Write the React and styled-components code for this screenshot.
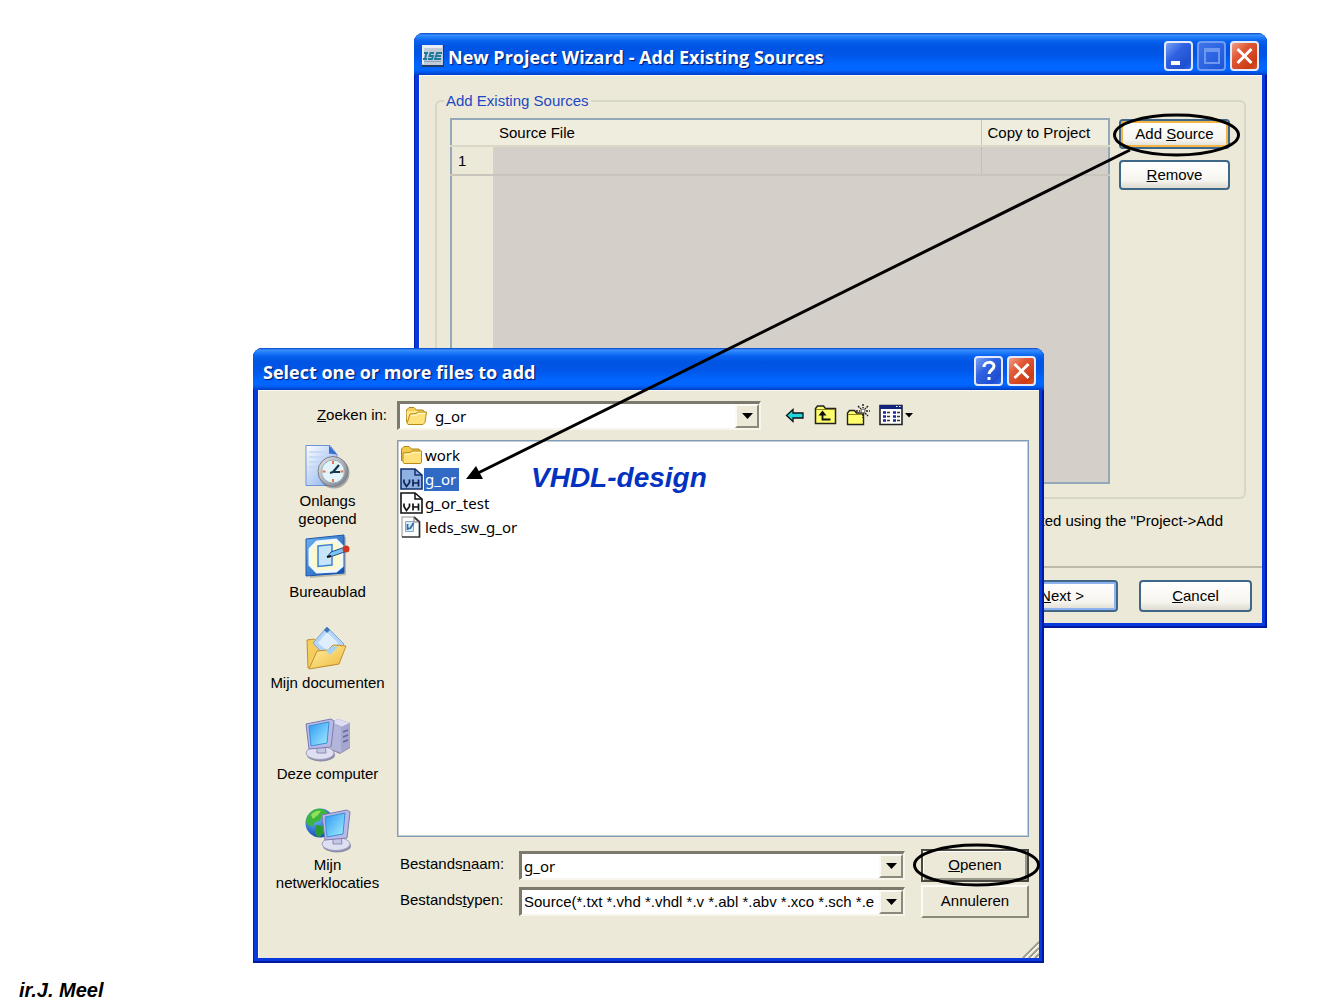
import React from "react";
import styled, { createGlobalStyle, css } from "styled-components";

const face = "#ece9d8";
const ui = '"Liberation Sans", Arial, sans-serif';
const tahoma = '"Noto Sans", Tahoma, sans-serif';

const GlobalStyle = createGlobalStyle`
  *, *::before, *::after { box-sizing: border-box; }
  body { margin: 0; background: #fff; color: #000; font: 15px/18px ${ui}; }
  button, input, select { font: inherit; color: inherit; margin: 0; }
`;

const Slide = styled.main`
  position: relative;
  min-height: 100vh;
  overflow: hidden;
`;

/* ---------- windows ---------- */

const Window = styled.section`
  position: absolute;
  left: ${(p) => p.$x}px;
  top: ${(p) => p.$y}px;
  width: ${(p) => p.$w}px;
  display: flex;
  flex-direction: column;
  padding: 0 5px 5px;
  border-radius: 9px 9px 0 0;
  background: #0839dc;
  box-shadow: inset -2px -2px 0 #00189c, inset 1px 0 0 #0020b0;
  overflow: hidden;
`;

const TitleBar = styled.header`
  display: flex;
  align-items: center;
  gap: 4px;
  height: 42px;
  margin: 0 -5px;
  padding: 4px 8px 0 ${(p) => p.$indent}px;
  background: linear-gradient(
    #0a46c8 0, #3a90ff 2px, #2480fa 4px, #0862ee 8px, #0054e3 14px,
    #0056e8 22px, #0066ff 32px, #0066ff 37px, #0050e0 40px, #003cc0 42px
  );
`;

const Title = styled.h1`
  flex: 1;
  margin: 0;
  padding-top: 2px;
  color: #fff;
  font: 700 18px/24px "Open Sans", "Trebuchet MS", sans-serif;
  white-space: nowrap;
  text-shadow: 1px 1px 1px #00136b;
`;

const captionTone = {
  blue: "linear-gradient(135deg, #7ba2f5, #2f62e0 40%, #1f4fd0 80%, #2a6cf0)",
  dim: "linear-gradient(135deg, #3f74e8, #1c55dc)",
  red: "linear-gradient(135deg, #f0a088, #e05a38 35%, #cc3c14 80%, #d8552c)",
};

const CaptionButton = styled.button`
  width: 29px;
  height: 30px;
  padding: 0;
  border: 2px solid ${(p) => (p.$tone === "dim" ? "#6f9bf2" : "#e4eafa")};
  border-radius: 4px;
  background: ${(p) => captionTone[p.$tone]};
  svg { display: block; width: 100%; height: 100%; }
`;

const Body = styled.div`
  background: ${face};
  box-shadow: inset 1px 1px 0 #fbf9f0;
`;

/* ---------- wizard ---------- */

const WizardBody = styled(Body)`
  padding-top: 17px;
`;

const Group = styled.fieldset`
  display: flex;
  align-items: flex-start;
  gap: 9px;
  height: 407px;
  margin: 0 16px;
  padding: 8px 14px 12px 13px;
  border: 2px solid #d8d6c6;
  border-radius: 6px;
`;

const Legend = styled.legend`
  margin-left: -6px;
  padding: 0 2px;
  color: #1c48c4;
`;

const SourceTable = styled.table`
  flex: 1;
  height: 366px;
  table-layout: fixed;
  border-collapse: collapse;
  border: 2px solid #93a9b8;
  background: #d4cfc8;
  text-align: left;
  th, td { padding: 0 6px; font-weight: 400; }
  thead th { height: 27px; background: #efedde; border-bottom: 2px solid #dcd8c8; }
  tbody th { background: ${face}; }
`;

const SourceRow = styled.tr`
  height: 29px;
  th, td { border-bottom: 2px solid #c9c5bc; }
  td + td { border-left: 1px solid #c4c0b8; }
`;

const RowHead = styled.col`
  width: 42px;
`;
const CopyCol = styled.col`
  width: 128px;
`;

const CopyHead = styled.th`
  border-left: 1px solid #c8c5b4;
`;

const ButtonColumn = styled.div`
  display: flex;
  flex-direction: column;
  gap: 11px;
  width: 111px;
  padding-top: 1px;
`;

const XpButton = styled.button`
  height: ${(p) => p.$h || 30}px;
  width: ${(p) => (p.$w ? `${p.$w}px` : "auto")};
  padding: 0;
  border: 2px solid #3f6788;
  border-radius: 4px;
  background: linear-gradient(#fff, #f6f5ef 70%, #dedbd0);
  ${(p) => p.$glow && css`box-shadow: inset 0 0 0 2px ${p.$glow};`}
`;

const Hint = styled.p`
  margin: 0;
  padding: 13px 39px 36px;
  text-align: right;
  white-space: nowrap;
`;

const WizardFooter = styled.footer`
  display: flex;
  justify-content: flex-end;
  gap: 21px;
  padding: 12px 10px 11px;
  border-top: 2px solid #bdbaac;
`;

/* ---------- file dialog ---------- */

const DialogBody = styled(Body)`
  padding: 11px 10px 0 0;
  position: relative;
`;

const LookIn = styled.div`
  display: flex;
  align-items: center;
  height: 28px;
`;

const LookLabel = styled.label`
  width: 139px;
  padding-right: 10px;
  text-align: right;
`;

const Combo = styled.div`
  display: flex;
  align-items: center;
  width: ${(p) => (p.$w ? `${p.$w}px` : "auto")};
  height: 29px;
  border: 2px solid;
  border-width: 3px 2px 2px 3px;
  border-color: #7c7a6c #f8f6ec #f8f6ec #7c7a6c;
  background: #fff;
  > svg { margin: 0 5px; flex: none; }
`;

const field = css`
  flex: 1;
  min-width: 0;
  height: 100%;
  padding: 0 2px;
  border: 0;
  outline: 0;
  background: transparent;
  line-height: 24px;
  appearance: none;
`;

const Select = styled.select`
  ${field}
  font-family: ${(p) => (p.$tahoma ? tahoma : ui)};
`;

const Input = styled.input`
  ${field}
  font-family: ${tahoma};
`;

const arrowBox = css`
  display: grid;
  place-items: center;
  width: 24px;
  height: 100%;
  padding: 0;
  border: 2px solid;
  border-color: #fbfaf4 #8b897a #8b897a #fbfaf4;
  background: ${face};
`;
const ArrowBox = styled.span`
  ${arrowBox}
  pointer-events: none;
`;
const ArrowButton = styled.button`
  ${arrowBox}
`;

const Tools = styled.div`
  display: flex;
  align-items: center;
  gap: 9px;
  margin-left: 24px;
`;

const ToolButton = styled.button`
  display: flex;
  padding: 0;
  border: 0;
  background: none;
`;

const Columns = styled.div`
  display: flex;
  margin-top: 11px;
`;

const Places = styled.nav`
  width: 139px;
  padding-top: 3px;
`;

const Place = styled.a`
  display: flex;
  flex-direction: column;
  align-items: center;
  gap: 3px;
  height: 91px;
  color: inherit;
  text-align: center;
  text-decoration: none;
  svg { flex: none; }
`;

const PlaceName = styled.span`
  width: 116px;
`;

const Main = styled.div`
  flex: 1;
  min-width: 0;
  padding-bottom: 40px;
`;

const FileList = styled.ul`
  height: 397px;
  margin: 0 0 12px;
  padding: 2px;
  list-style: none;
  border: 1px solid #7f9db9;
  outline: 1px solid #c3ccd0;
  outline-offset: -2px;
  background: #fff;
  font-family: ${tahoma};
`;

const FileItem = styled.li`
  display: flex;
  align-items: center;
  height: 24px;
`;

const FileName = styled.span`
  margin-left: 1px;
  padding: 2px 3px 2px 1px;
  line-height: 19px;
  ${(p) => p.$selected && css`background: #316ac5; color: #fff;`}
`;

const Form = styled.div`
  display: grid;
  grid-template-columns: 119px 1fr 107px;
  grid-auto-rows: 33px;
  row-gap: 3px;
  align-items: center;
  label { padding-left: 3px; padding-bottom: 4px; }
`;

const ClassicButton = styled.button`
  height: 33px;
  margin-left: -1px;
  padding: 0 0 2px;
  border: 2px solid;
  border-color: #fbfaf4 #8b897a #8b897a #fbfaf4;
  background: ${face};
  ${(p) => p.$default && css`
    border-color: #4a4840;
    box-shadow: inset 1px 1px 0 #fff, inset -2px -2px 0 #9a988a;
  `}
`;

const FormField = styled(Combo)`
  margin-left: 3px;
  margin-right: 17px;
`;

const Grip = styled.svg`
  position: absolute;
  right: 0;
  bottom: 0;
`;

/* ---------- slide annotations ---------- */

const Marks = styled.svg`
  position: absolute;
  left: 0;
  top: 0;
  pointer-events: none;
`;

const Note = styled.p`
  position: absolute;
  left: 531px;
  top: 458px;
  margin: 0;
  color: #0432c0;
  font: italic 700 28px/40px "Arial Narrow", ${ui};
`;

const Author = styled.p`
  position: absolute;
  left: 19px;
  top: 978px;
  margin: 0;
  font: italic 700 20px/24px "Arial Narrow", ${ui};
`;

/* ---------- icons ---------- */

const Cross = () => (
  <svg viewBox="0 0 25 26"><path d="M5.500 6l14 14M19.500 6l-14 14" stroke="#fff" strokeWidth="3" /></svg>
);

const IseLogo = () => (
  <svg width="22" height="22" viewBox="0 0 22 22">
    <path d="M0 0h22v22H0z" fill="#223a66" />
    <path d="M0 0h21v20H0z" fill="#c4cbd8" />
    <path d="M0 0h20v3H2v16H0z" fill="#e9edf4" />
    <path d="M2 8h4M4.500 8L3 14M1 14h4M12 8H8.500l-1 3h3.500l-1 3H6M20 8h-5l-2 6h6M14 11h5" fill="none" stroke="#1c7a9c" strokeWidth="1.800" />
    <path d="M2 16.500h17" stroke="#8fa3bd" />
  </svg>
);

const Folder = () => (
  <svg width="23" height="20" viewBox="0 0 23 20">
    <path d="M1.500 16V4L4 1.500h5L11.500 4H18l1.500 2v3" fill="#f6cf55" stroke="#b08416" />
    <path d="M2 17.500L1.500 5h17l.5 3" fill="#ffe88e" />
    <path d="M2 17.500L5 8l6-.5L13 6h8.500L20 16.500l-2 2H3z" fill="#ffe27a" stroke="#b98a14" />
    <path d="M6 9.500l6-.5 2-1.500h6" stroke="#fffbd2" fill="none" />
  </svg>
);

const ClosedFolder = () => (
  <svg width="23" height="20" viewBox="0 0 23 20">
    <path d="M1.500 16V4L4 1.500h5L11.500 4H19l1 2v10" fill="#f3c94c" stroke="#b08416" />
    <path d="M3 17V8l7-.5L12 6h9.500v11l-1 1.500H4z" fill="#ffe07a" stroke="#b98a14" />
    <path d="M4.500 9.500l6-.5 2-1.500h8" stroke="#fffbd2" fill="none" />
  </svg>
);

const VhdlFile = ({ selected }) => (
  <svg width="23" height="22" viewBox="0 0 23 22">
    <path d="M1 1h14l7 6v14H1z" fill={selected ? "#8fb0e2" : "#fff"} stroke={selected ? "#16306e" : "#111"} strokeWidth="1.600" />
    <path d="M15 1v6h7" fill="none" stroke={selected ? "#16306e" : "#111"} strokeWidth="1.500" />
    <path d="M4 11.500v3l2.500 4 3-4v-3M13 11.500v7M18.500 11.500v7M13 15h5.500" fill="none" stroke={selected ? "#0c2258" : "#111"} strokeWidth="1.700" />
  </svg>
);

const UcfFile = () => (
  <svg width="23" height="22" viewBox="0 0 23 22">
    <path d="M2 1h12l5 5v15H2z" fill="#fdfdfd" />
    <path d="M2 21V1h12" fill="none" stroke="#b5b5b5" strokeWidth="1.500" />
    <path d="M14 1l5.500 5v15H2" fill="none" stroke="#333" strokeWidth="1.700" />
    <path d="M14 1v5h5" fill="none" stroke="#777" />
    <path d="M5.500 5.500h8v10h-8z" fill="#dcebf8" stroke="#86a8cc" />
    <path d="M7.500 8v6M7.500 13l3-1 3-5" stroke="#2f6fae" strokeWidth="1.800" fill="none" />
  </svg>
);

const Down = () => (
  <svg width="11" height="6" viewBox="0 0 11 6"><path d="M0 0h11L5.500 6z" /></svg>
);

const BackIcon = () => (
  <svg width="20" height="22" viewBox="0 0 20 22">
    <path d="M1.500 11.500L8 5.500V9h10v5H8v3.500z" fill="#1fd6dc" stroke="#111" strokeWidth="1.300" />
  </svg>
);

const UpIcon = () => (
  <svg width="23" height="22" viewBox="0 0 23 22">
    <path d="M1.500 19.500v-15l2-2.500h6l2 2.500h10v15z" fill="#ffff6c" stroke="#222" strokeWidth="1.500" />
    <path d="M2 5.500h19" stroke="#8a8420" />
    <path d="M8.500 8v7.500h8" fill="none" stroke="#111" strokeWidth="1.800" />
    <path d="M4.500 11.500l4-5 4 5z" fill="#111" />
  </svg>
);

const NewFolderIcon = () => (
  <svg width="24" height="24" viewBox="0 0 24 24">
    <path d="M1.500 21.500V10l2-2.500h5l2 2.500h7v11.500z" fill="#ffff6c" stroke="#222" strokeWidth="1.400" />
    <path d="M2 11.500h15" stroke="#8a8420" />
    <path d="M17 1v4M17 11v4M10 8h4M20 8h4M12 3l3 3M22 3l-3 3M19 10l3 3" stroke="#222" strokeWidth="1.500" strokeDasharray="2 1" />
    <circle cx="17" cy="8" r="2" fill="#fff" stroke="#555" />
  </svg>
);

const ViewIcon = () => (
  <svg width="34" height="22" viewBox="0 0 34 22">
    <path d="M1 1.500h22v19H1z" fill="#fff" stroke="#222" strokeWidth="1.600" />
    <path d="M1 1h22v4H1z" fill="#12257c" />
    <path d="M17 2.500h1.500M20 2.500h1.500" stroke="#fff" />
    <path d="M4 8.500h3M14 8.500h3M4 12.500h3M14 12.500h3M4 16.500h3M14 16.500h3" stroke="#1a2aa0" strokeWidth="2.400" />
    <path d="M8 8.500h3M18 8.500h3M8 12.500h3M18 12.500h3M8 16.500h3M18 16.500h3" stroke="#333" strokeWidth="1.400" />
    <path d="M26 9h8l-4 4.500z" />
  </svg>
);

const Grad = ({ id, from, to }) => (
  <linearGradient id={id} x1="0" y1="0" x2="1" y2="1">
    <stop offset="0" stopColor={from} />
    <stop offset="1" stopColor={to} />
  </linearGradient>
);

const RecentIcon = () => (
  <svg width="46" height="46" viewBox="0 0 46 46">
    <defs><Grad id="page" from="#ffffff" to="#7fa8ee" /><Grad id="rim" from="#e8eaee" to="#6f7783" /></defs>
    <path d="M1 2.500h24l7 9v31H1z" fill="url(#page)" stroke="#6c93d6" />
    <path d="M4 9h17M4 14h20M4 19h16M4 24h13M4 29h11" stroke="#c2d6f4" strokeWidth="1.500" />
    <path d="M24 2.500l8 9-8-1z" fill="#3a6fd0" />
    <circle cx="29" cy="30" r="15.500" fill="#565c66" opacity=".45" />
    <circle cx="28" cy="28.500" r="15" fill="url(#rim)" stroke="#777f8a" />
    <circle cx="28" cy="28.500" r="11.500" fill="#e2f4fa" stroke="#a3abb5" />
    <path d="M28 18v3M28 36v3M17.500 28.500h3M35.500 28.500h3" stroke="#e07848" strokeWidth="2" />
    <path d="M34 22l-6 7h7M28 29l-3 1" stroke="#16384c" strokeWidth="2.200" fill="none" />
  </svg>
);

const DesktopIcon = () => (
  <svg width="46" height="46" viewBox="0 0 46 46">
    <defs><Grad id="blotter" from="#6fb4f2" to="#0b4cae" /></defs>
    <path d="M5 7l36-4v38L5 44z" fill="#8a8a80" opacity=".5" />
    <path d="M1 5l38-4v38L1 42z" fill="url(#blotter)" stroke="#1a58ac" />
    <path d="M12 8l19-2 6 6v20l-6 5-19 1-7-7V15z" fill="#fdf9cf" />
    <path d="M12 8l19-2 6 6v20l-6 5-19 1-7-7V15z" fill="none" stroke="#f0f7ff" strokeWidth="3" />
    <path d="M13 12l14-1.500V31l-14 1.500z" fill="#c8e6fb" stroke="#3d83d2" strokeWidth="1.500" />
    <path d="M22 23l4-5 14-5 2 4-14 5z" fill="#7cc4f0" stroke="#1f4f96" />
    <path d="M22 23l4-1" stroke="#111" strokeWidth="2" />
    <circle cx="41" cy="15" r="3.500" fill="#d2341c" />
  </svg>
);

const DocumentsIcon = () => (
  <svg width="46" height="46" viewBox="0 0 46 46">
    <defs><Grad id="docs" from="#fff3a6" to="#efb63a" /></defs>
    <path d="M3 43l-1-28 7-1 4 4 24 6-9 16z" fill="#f4cd5e" stroke="#c0902a" />
    <path d="M8 18L22 2l17 17-14 17z" fill="#b4d4f8" stroke="#7ca6da" />
    <path d="M13 18l9-11 11 11-8 10z" fill="#deeefd" />
    <path d="M19 5l3-3 3 3-3 3z" fill="#3e77ba" />
    <path d="M4 44l8-18 11-1 5-5 13 1-7 18z" fill="url(#docs)" stroke="#c0902a" />
    <path d="M21 26l7-5 5 1-8 8z" fill="#a4d2f3" />
  </svg>
);

const Monitor = ({ x = 0, y = 0 }) => (
  <g transform={`translate(${x} ${y})`}>
    <ellipse cx="16" cy="37" rx="14" ry="6.500" fill="#8c8ca8" />
    <ellipse cx="15" cy="35" rx="14" ry="6.500" fill="#dedff0" stroke="#a0a0c0" />
    <path d="M12 26h8l1 9h-9z" fill="#c6c7e4" stroke="#8d8db6" />
    <path d="M1 6l25-5 3 2-3 26-22 2z" fill="#b9b9e6" stroke="#7b7bb4" />
    <path d="M4 8l20-4-2 21-16 3z" fill="url(#screen)" stroke="#3b8ed8" />
  </g>
);

const ComputerIcon = () => (
  <svg width="46" height="46" viewBox="0 0 46 46">
    <defs><Grad id="screen" from="#2f97f2" to="#a4f0ff" /></defs>
    <path d="M26 6l7-3 12 4v25l-10 6-9-4z" fill="#8888b0" />
    <path d="M26 6l7-3 12 4-8 4z" fill="#dcdcf2" />
    <path d="M26 6l10 5v26l-10-4z" fill="#b4b5da" />
    <path d="M36 11l9-4v24l-9 6z" fill="#a5a6d0" />
    <path d="M38 16l5-2M38 21l5-2M38 26l5-2" stroke="#66679c" strokeWidth="1.500" />
    <Monitor y={2} />
  </svg>
);

const NetworkIcon = () => (
  <svg width="46" height="46" viewBox="0 0 46 46">
    <defs>
      <radialGradient id="sea" cx=".35" cy=".3" r=".8">
        <stop offset="0" stopColor="#6fc0ff" /><stop offset="1" stopColor="#0a3fae" />
      </radialGradient>
    </defs>
    <circle cx="15" cy="16" r="14.500" fill="url(#sea)" />
    <path d="M5 6c4-5 10-5 15-3l3 4-6 1-2 6-5 1-3 5-5-3c-2-4 0-8 3-11z" fill="#3cb53a" />
    <path d="M11 18l7 1 2 5-5 6c-4 0-5-3-5-6z" fill="#2a9a34" />
    <path d="M6 8c2-3 6-5 10-4l-3 4-5 4z" fill="#8fe05f" />
    <Monitor x={16} y={2} />
  </svg>
);

/* ---------- page ---------- */

const places = [
  ["Onlangs geopend", RecentIcon],
  ["Bureaublad", DesktopIcon],
  ["Mijn documenten", DocumentsIcon],
  ["Deze computer", ComputerIcon],
  ["Mijn netwerklocaties", NetworkIcon],
];

const files = [
  ["work", ClosedFolder],
  ["g_or", VhdlFile, true],
  ["g_or_test", VhdlFile],
  ["leds_sw_g_or", UcfFile],
];

function Wizard() {
  return (
    <Window $x={414} $y={33} $w={853} aria-label="New Project Wizard">
      <TitleBar $indent={8}>
        <IseLogo />
        <Title>New Project Wizard - Add Existing Sources</Title>
        <CaptionButton $tone="blue" aria-label="Minimize">
          <svg viewBox="0 0 25 26"><path d="M5 18h9v4H5z" fill="#fff" /></svg>
        </CaptionButton>
        <CaptionButton $tone="dim" aria-label="Maximize">
          <svg viewBox="0 0 25 26"><path d="M6 6h14v14H6zM6 8h14" fill="none" stroke="#6e97ee" strokeWidth="2" /></svg>
        </CaptionButton>
        <CaptionButton $tone="red" aria-label="Close"><Cross /></CaptionButton>
      </TitleBar>
      <WizardBody>
        <Group>
          <Legend>Add Existing Sources</Legend>
          <SourceTable>
            <colgroup><RowHead /><col /><CopyCol /></colgroup>
            <thead>
              <tr><th /><th scope="col">Source File</th><CopyHead scope="col">Copy to Project</CopyHead></tr>
            </thead>
            <tbody>
              <SourceRow><th scope="row">1</th><td /><td /></SourceRow>
              <tr><th /><td /><td /></tr>
            </tbody>
          </SourceTable>
          <ButtonColumn>
            <XpButton $glow="#f3b545">Add <u>S</u>ource</XpButton>
            <XpButton><u>R</u>emove</XpButton>
          </ButtonColumn>
        </Group>
        <Hint>created using the "Project-&gt;Add</Hint>
        <WizardFooter>
          <XpButton $w={112} $h={32} $glow="#8fb2ee"><u>N</u>ext &gt;</XpButton>
          <XpButton $w={113} $h={32}><u>C</u>ancel</XpButton>
        </WizardFooter>
      </WizardBody>
    </Window>
  );
}

function FileDialog() {
  return (
    <Window $x={253} $y={348} $w={791} aria-label="Select files">
      <TitleBar $indent={10}>
        <Title>Select one or more files to add</Title>
        <CaptionButton $tone="blue" aria-label="Help">
          <svg viewBox="0 0 25 26"><path d="M8 9c0-6 10-6 10-1 0 4-5 4-5 8M13 19v3" fill="none" stroke="#fff" strokeWidth="3" /></svg>
        </CaptionButton>
        <CaptionButton $tone="red" aria-label="Close"><Cross /></CaptionButton>
      </TitleBar>
      <DialogBody>
        <LookIn>
          <LookLabel htmlFor="look"><u>Z</u>oeken in:</LookLabel>
          <Combo $w={364}>
            <Folder />
            <Select id="look" $tahoma><option>g_or</option></Select>
            <ArrowBox><Down /></ArrowBox>
          </Combo>
          <Tools>
            <ToolButton aria-label="Back"><BackIcon /></ToolButton>
            <ToolButton aria-label="Up one level"><UpIcon /></ToolButton>
            <ToolButton aria-label="New folder"><NewFolderIcon /></ToolButton>
            <ToolButton aria-label="View"><ViewIcon /></ToolButton>
          </Tools>
        </LookIn>
        <Columns>
          <Places>
            {places.map(([name, Icon]) => (
              <Place href="#" key={name}><Icon /><PlaceName>{name}</PlaceName></Place>
            ))}
          </Places>
          <Main>
            <FileList>
              {files.map(([name, Icon, selected]) => (
                <FileItem key={name}>
                  <Icon selected={selected} />
                  <FileName $selected={selected}>{name}</FileName>
                </FileItem>
              ))}
            </FileList>
            <Form>
              <label htmlFor="name">Bestands<u>n</u>aam:</label>
              <FormField>
                <Input id="name" defaultValue="g_or" />
                <ArrowButton aria-label="Show names"><Down /></ArrowButton>
              </FormField>
              <ClassicButton $default><u>O</u>penen</ClassicButton>
              <label htmlFor="type">Bestands<u>t</u>ypen:</label>
              <FormField>
                <Select id="type"><option>Source(*.txt *.vhd *.vhdl *.v *.abl *.abv *.xco *.sch *.e</option></Select>
                <ArrowBox><Down /></ArrowBox>
              </FormField>
              <ClassicButton>Annuleren</ClassicButton>
            </Form>
          </Main>
        </Columns>
        <Grip width="17" height="17" viewBox="0 0 17 17">
          <path d="M1 17L17 1M7 17L17 7M13 17l4-4" stroke="#a09d8c" strokeWidth="2" />
          <path d="M3 17L17 3M9 17l8-8" stroke="#fff" />
        </Grip>
      </DialogBody>
    </Window>
  );
}

export default function App() {
  return (
    <Slide>
      <GlobalStyle />
      <Wizard />
      <FileDialog />
      <Note>VHDL-design</Note>
      <Author>ir.J. Meel</Author>
      <Marks width="1344" height="1008" viewBox="0 0 1344 1008">
        <g fill="none" stroke="#000" strokeWidth="3">
          <ellipse cx="1176.500" cy="135" rx="62" ry="20" />
          <ellipse cx="976.500" cy="865" rx="62" ry="20" />
          <path d="M1130 150L478 473" />
        </g>
        <path d="M466 479l10-13 7 13z" />
      </Marks>
    </Slide>
  );
}
